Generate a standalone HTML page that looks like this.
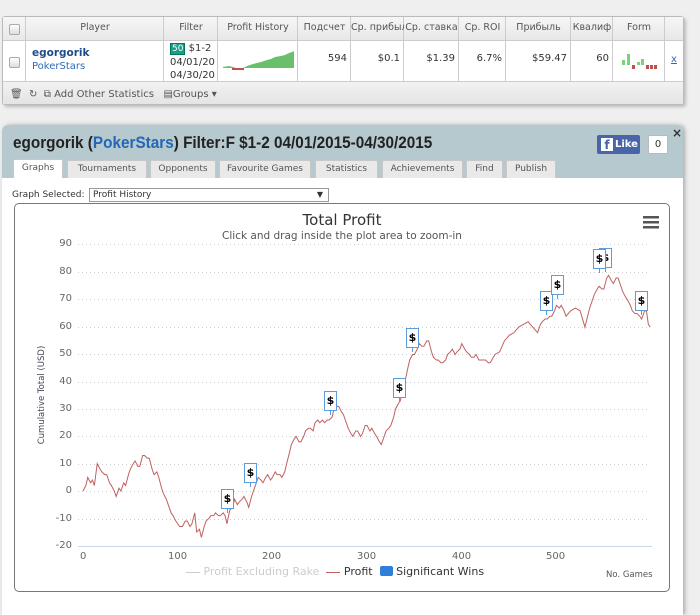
<!DOCTYPE html>
<html><head><meta charset="utf-8"><style>
*{margin:0;padding:0;box-sizing:border-box}
body{width:700px;height:611px;background:#efefef;font-family:"DejaVu Sans","Liberation Sans",sans-serif;position:relative;overflow:hidden;font-size:10px;color:#333}
.a{position:absolute}
.tbl{left:2px;top:16px;width:682px;height:89px;border:1px solid #bbb;border-radius:3px;background:#fff;box-shadow:2px 2px 3px #bbb}
.hd{left:0;top:0;width:680px;height:24px;background:linear-gradient(#f6f6f6,#e8e8e8);border-bottom:1px solid #ccc}
.c{position:absolute;top:0;height:64px;border-right:1px solid #ccc}
.ht{position:absolute;top:5px;font-size:9.5px;color:#555;text-align:center}
.ft{left:0;top:64px;width:680px;height:23px;background:linear-gradient(#f2f2f2,#e4e4e4);border-top:1px solid #ccc}
.num{position:absolute;top:36px;font-size:10px;color:#333;text-align:right}
.cb{position:absolute;width:11px;height:11px;border:1px solid #aaa;border-radius:2px;background:linear-gradient(#fff,#ddd)}
.pan{left:2px;top:125px;width:681px;height:490px;background:#fff;border-radius:6px 6px 0 0;box-shadow:2px 0 4px #aaa}
.phd{left:0;top:0;width:681px;height:53px;background:#b6c9cf;border-radius:6px 6px 0 0}
.tab{position:absolute;top:35px;height:18px;background:#e9e9e9;border:1px solid #c8c8c8;border-bottom:none;font-size:9px;color:#555;text-align:center;line-height:17px;border-radius:2px 2px 0 0;white-space:nowrap}
.flag{position:absolute;width:13px;height:20px;border:1.5px solid #5b9be0;background:#fff;font-size:11px;font-weight:bold;color:#000;text-align:center;line-height:17px}
.flag:after{content:"";position:absolute;left:5px;top:18px;width:1px;height:5px;background:#5b9be0}
.yl{position:absolute;left:40px;width:32px;text-align:right;font-size:10px;color:#666}
.xl{position:absolute;top:551px;font-size:10px;color:#666}
</style></head><body>

<div class="a tbl">
 <div class="a hd"></div>
 <div class="c" style="left:0;width:23px"></div>
 <div class="c" style="left:23px;width:138px"></div>
 <div class="c" style="left:161px;width:54px"></div>
 <div class="c" style="left:215px;width:80px"></div>
 <div class="c" style="left:295px;width:53px"></div>
 <div class="c" style="left:348px;width:53px"></div>
 <div class="c" style="left:401px;width:55px"></div>
 <div class="c" style="left:456px;width:47px"></div>
 <div class="c" style="left:503px;width:65px"></div>
 <div class="c" style="left:568px;width:42px"></div>
 <div class="c" style="left:610px;width:52px"></div>
 <div class="cb" style="left:6px;top:7px"></div>
 <div class="cb" style="left:6px;top:40px"></div>
 <div class="ht" style="left:23px;width:138px">Player</div>
 <div class="ht" style="left:161px;width:54px">Filter</div>
 <div class="ht" style="left:215px;width:80px">Profit History</div>
 <div class="ht" style="left:295px;width:53px">Подсчет</div>
 <div class="ht" style="left:348px;width:53px;overflow:hidden;white-space:nowrap">Ср. прибыль</div>
 <div class="ht" style="left:401px;width:55px;overflow:hidden;white-space:nowrap">Ср. ставка</div>
 <div class="ht" style="left:456px;width:47px">Ср. ROI</div>
 <div class="ht" style="left:503px;width:65px">Прибыль</div>
 <div class="ht" style="left:568px;width:42px;overflow:hidden;white-space:nowrap">Квалиф</div>
 <div class="ht" style="left:610px;width:52px">Form</div>
 <div class="a" style="left:29px;top:30px;font-weight:bold;color:#1e4b8c;font-size:10.5px">egorgorik</div>
 <div class="a" style="left:29px;top:44px;color:#2c6ab8;font-size:10px">PokerStars</div>
 <div class="a" style="left:167px;top:25px;font-size:10px;line-height:13px;width:48px;overflow:hidden;white-space:nowrap"><span style="background:#1a9e8a;color:#fff;font-size:9px;padding:0 1px;border:1px solid #075">50</span> $1-2<br>04/01/20<br>04/30/20</div>
 <svg class="a" style="left:218px;top:33px" width="76" height="24"><path d="M2 17 L8 16 L12 17 L15 18 L22 18 L26 16 L32 14 L40 12 L46 10 L50 9 L54 7 L60 6 L64 5 L68 3 L71 2 L73 1 L73 18 L2 18Z" fill="#6abf6a"/><path d="M11 18h12v2h-12z" fill="#c05050"/></svg>
 <div class="num" style="left:295px;width:49px;top:36px">594</div>
 <div class="num" style="left:348px;width:49px">$0.1</div>
 <div class="num" style="left:401px;width:51px">$1.39</div>
 <div class="num" style="left:456px;width:43px">6.7%</div>
 <div class="num" style="left:503px;width:61px">$59.47</div>
 <div class="num" style="left:568px;width:38px">60</div>
 <svg class="a" style="left:618px;top:35px" width="40" height="20"><rect x="1" y="8" width="3" height="5" fill="#7dd17d"/><rect x="6" y="2" width="3" height="11" fill="#7dd17d"/><rect x="11" y="13" width="3" height="4" fill="#c05050"/><rect x="16" y="10" width="3" height="3" fill="#7dd17d"/><rect x="20" y="7" width="3" height="6" fill="#7dd17d"/><rect x="25" y="13" width="3" height="4" fill="#c05050"/><rect x="29" y="13" width="3" height="4" fill="#c05050"/><rect x="33" y="13" width="3" height="4" fill="#c05050"/></svg>
 <div class="a" style="left:668px;top:37px;color:#2c6ab8;text-decoration:underline;font-size:10px">x</div>
 <div class="a ft"></div>
 <div class="a" style="left:7px;top:72px;font-size:10px;color:#555">🗑&nbsp; ↻ &nbsp;⧉ Add Other Statistics &nbsp; ▤Groups ▾</div>
</div>

<div class="a pan">
 <div class="a phd"></div>
 <div class="a" style="left:11px;top:8px;font-family:'Liberation Sans',sans-serif;font-size:17px;font-weight:bold;color:#222;transform:scaleX(0.9);transform-origin:0 0;white-space:nowrap">egorgorik (<span style="color:#2466b5">PokerStars</span>) Filter:F $1-2 04/01/2015-04/30/2015</div>
 <div class="a" style="left:595px;top:10px;width:43px;height:19px;background:#4a64a8;border-radius:2px;color:#fff;font-size:10px;font-weight:bold;line-height:19px"><span style="display:inline-block;background:#fff;color:#4a64a8;width:12px;height:13px;margin:3px 2px 0 4px;line-height:14px;text-align:center;vertical-align:top;font-size:12px">f</span>Like</div>
 <div class="a" style="left:646px;top:10px;width:20px;height:19px;background:#fff;border:1px solid #bbb;font-size:10px;text-align:center;line-height:17px">0</div>
 <div class="a" style="left:670px;top:1px;font-size:12px;font-weight:bold">×</div>
 <div class="tab" style="left:11px;width:50px;background:#fff;top:34px;height:19px">Graphs</div>
 <div class="tab" style="left:65px;width:80px">Tournaments</div>
 <div class="tab" style="left:148px;width:66px">Opponents</div>
 <div class="tab" style="left:217px;width:92px">Favourite Games</div>
 <div class="tab" style="left:313px;width:63px">Statistics</div>
 <div class="tab" style="left:380px;width:81px">Achievements</div>
 <div class="tab" style="left:464px;width:37px">Find</div>
 <div class="tab" style="left:504px;width:50px">Publish</div>
 <div class="a" style="left:10px;top:65px;font-size:9px;color:#333">Graph Selected:</div>
 <div class="a" style="left:87px;top:63px;width:240px;height:14px;border:1px solid #999;font-size:9px;padding-left:3px;line-height:12px">Profit History<span style="position:absolute;right:5px;font-size:8px">▼</span></div>
</div>

<div class="a" style="left:14px;top:203px;width:656px;height:389px;border:1px solid #777;border-radius:5px;background:#fff"></div>
<div class="a" style="left:0;top:211px;width:684px;text-align:center;font-size:15px;color:#333">Total Profit</div>
<div class="a" style="left:0;top:230px;width:684px;text-align:center;font-size:10.5px;color:#555">Click and drag inside the plot area to zoom-in</div>
<svg class="a" style="left:643px;top:216px" width="16" height="14"><rect y="0" width="16" height="2.5" fill="#555"/><rect y="5" width="16" height="2.5" fill="#555"/><rect y="10" width="16" height="2.5" fill="#555"/></svg>

<svg class="a" style="left:0;top:0" width="700" height="611">
 <g stroke="#ccc" stroke-dasharray="1,3" stroke-width="1">
  <path d="M78 244.5H650M78 272.5H650M78 299.5H650M78 327.5H650M78 354.5H650M78 382.5H650M78 409.5H650M78 436.5H650M78 464.5H650M78 491.5H650M78 519.5H650"/>
 </g>
 <path d="M78 546.5H652" stroke="#ccd6eb"/>
 <g transform="translate(83,491) scale(0.947,-2.73)">
 <path vector-effect="non-scaling-stroke" fill="none" stroke="#c06060" stroke-width="1" d="M0 0L3 2L5 5L8 3L10 4L12 2L15 10L18 8L20 7L23 6L25 6L28 3L30 2L33 0L35 -2L38 1L40 0L43 3L45 2L48 6L50 8L53 10L55 11L58 9L60 9L63 13L65 13L68 12L70 12L73 8L75 6L78 7L80 5L83 1L85 -1L88 -3L90 -5L93 -8L95 -9L98 -11L100 -12L102 -13L105 -13L108 -11L110 -11L113 -13L115 -12L118 -8L120 -15L123 -14L125 -17L128 -13L130 -11L133 -10L135 -9L138 -9L140 -8L143 -9L145 -9L148 -8L150 -9L152 -12L155 -7L158 -6L160 -3L163 -5L165 -4L168 -3L170 -2L173 -4L175 -6L178 -2L180 0L183 3L185 5L188 4L190 3L193 5L195 6L198 4L200 5L203 7L205 6L208 6L210 5L213 7L215 10L218 14L220 17L223 19L225 20L228 18L230 18L233 20L235 22L238 23L240 23L243 22L245 25L248 26L250 25L253 26L255 25L258 26L260 26L263 27L265 30L268 31L270 31L273 29L275 28L278 25L280 23L283 21L285 20L288 22L290 22L293 20L295 21L298 24L300 24L303 22L305 23L308 21L310 20L313 18L315 17L318 20L320 22L323 23L325 24L328 27L330 30L333 32L335 33L338 37L340 40L343 45L345 48L348 50L350 50L353 52L355 54L358 53L360 53L363 55L365 55L368 51L370 49L373 48L375 48L378 47L380 47L383 48L385 50L388 51L390 52L393 50L395 51L398 52L400 54L403 52L405 51L408 50L410 49L413 49L415 50L418 48L420 48L423 48L425 48L428 47L430 47L435 50L440 51L445 55L450 57L455 58L460 60L465 61L470 62L475 60L480 58L483 61L485 62L488 63L490 63L493 64L495 64L498 66L500 68L503 67L505 68L508 66L510 64L515 66L520 67L525 66L530 60L535 67L540 72L543 74L545 75L548 74L550 74L553 78L555 79L558 77L560 76L563 78L565 78L568 75L570 73L573 71L575 70L578 68L580 66L583 65L585 65L588 64L590 63L593 66L595 66L597 61L599 60"/>
 </g>
</svg>

<div class="flag" style="left:221px;top:489px">$</div>
<div class="flag" style="left:244px;top:463px">$</div>
<div class="flag" style="left:324px;top:391px">$</div>
<div class="flag" style="left:393px;top:378px">$</div>
<div class="flag" style="left:406px;top:328px">$</div>
<div class="flag" style="left:540px;top:291px">$</div>
<div class="flag" style="left:551px;top:275px">$</div>
<div class="flag" style="left:599px;top:248px">$</div>
<div class="flag" style="left:593px;top:249px">$</div>
<div class="flag" style="left:635px;top:291px">$</div>

<div class="yl" style="top:238px">90</div><div class="yl" style="top:266px">80</div><div class="yl" style="top:293px">70</div><div class="yl" style="top:321px">60</div><div class="yl" style="top:348px">50</div><div class="yl" style="top:376px">40</div><div class="yl" style="top:403px">30</div><div class="yl" style="top:430px">20</div><div class="yl" style="top:458px">10</div><div class="yl" style="top:485px">0</div><div class="yl" style="top:513px">-10</div><div class="yl" style="top:540px">-20</div>
<div class="a" style="left:-8px;top:390px;width:100px;text-align:center;transform:rotate(-90deg);font-size:8.5px;color:#445;white-space:nowrap">Cumulative Total (USD)</div>
<div class="xl" style="left:80px">0</div><div class="xl" style="left:168px">100</div><div class="xl" style="left:262px">200</div><div class="xl" style="left:357px">300</div><div class="xl" style="left:452px">400</div><div class="xl" style="left:546px">500</div>
<div class="a" style="left:186px;top:565px;font-size:11px;color:#ccc;white-space:nowrap"><span style="display:inline-block;width:14px;height:1px;background:#ccc;vertical-align:middle"></span> Profit Excluding Rake &nbsp;<span style="display:inline-block;width:14px;height:1px;background:#c06060;vertical-align:middle"></span> <span style="color:#333">Profit</span> &nbsp;<span style="display:inline-block;width:13px;height:10px;background:#2f7ed8;border-radius:2px;vertical-align:-1px"></span> <span style="color:#333">Significant Wins</span></div>
<div class="a" style="left:606px;top:570px;font-size:8.5px;color:#555">No. Games</div>
</body></html>
